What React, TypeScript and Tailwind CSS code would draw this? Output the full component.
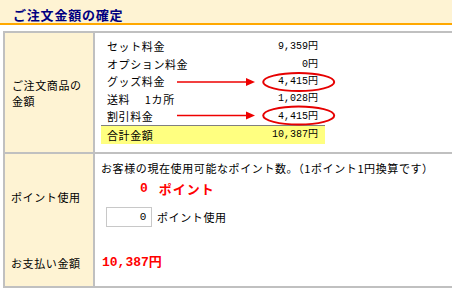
import React from 'react';

const jp = "font-['Noto_Sans_CJK_JP',sans-serif]";
const mono = "font-['Liberation_Mono','Noto_Sans_CJK_JP',monospace]";

const lines = [
  { label: 'セット料金', amount: '9,359' },
  { label: 'オプション料金', amount: '0' },
  { label: 'グッズ料金', amount: '4,415' },
  { label: '送料\u3000 1カ所', amount: '1,028' },
  { label: '割引料金', amount: '4,415' },
];

const Marks = () => (
  <svg className="pointer-events-none absolute left-0 top-0" width="452" height="290">
    {/* arrows + circles around the matching amounts */}
    {[82, 115.5].map((y) => (
      <g key={y}>
        <line x1="177" y1={y} x2="248" y2={y} stroke="#ee0000" strokeWidth="1.3" />
        <polygon points={`246,${y - 4} 255,${y} 246,${y + 4}`} fill="#ee0000" />
        <ellipse cx="298.7" cy={y} rx="35.5" ry="9" fill="none" stroke="#e60000" strokeWidth="2" />
      </g>
    ))}
  </svg>
);

const App = () => {
  return (
    <div className={`relative h-[290px] w-[452px] overflow-hidden bg-white text-black ${jp}`}>
      {/* Title bar */}
      <div className="h-[25px] border-b-2 border-[#ffa800] bg-[#fef3d3] pl-[13px] pt-[6px]">
        <h1 className="text-[13px] font-bold leading-[17px] tracking-[0.8px] text-[#000080]">ご注文金額の確定</h1>
      </div>

      {/* Table */}
      <div className="ml-[3px] mt-[6px] border-y-2 border-l-2 border-[#c0c0c0] text-[11px] tracking-[0.6px]">
        {/* Order amount */}
        <div className="flex h-[121px] border-b-2 border-[#c0c0c0]">
          <div className="flex w-[90px] shrink-0 items-center border-r-2 border-[#c0c0c0] bg-[#fef3d3] pl-[7px] pr-[2px] leading-[16px]">
            ご注文商品の金額
          </div>
          <div className="pl-[6px] pt-[5px]">
            <div className="w-[224px]">
              {lines.map((l) => (
                <div key={l.label} className="flex h-[17.4px] items-center justify-between pl-[6px] pr-[7px]">
                  <span className="whitespace-pre">{l.label}</span>
                  <span className={`${mono} text-[10px] tracking-normal`}>{l.amount}円</span>
                </div>
              ))}
              <div className="flex h-[19px] items-center justify-between border-t border-[#808080] bg-[#ffff80] pl-[6px] pr-[7px]">
                <span>合計金額</span>
                <span className={`${mono} text-[10px] tracking-normal`}>10,387円</span>
              </div>
            </div>
          </div>
        </div>

        {/* Points + payment */}
        <div className="grid h-[132px] grid-cols-[90px_1fr] grid-rows-[86px_46px]">
          <div className="flex items-center border-r-2 border-[#c0c0c0] bg-[#fef3d3] pl-[6px]">ポイント使用</div>
          <div className="pl-[6px] pt-[7px]">
            <p className="leading-[14px]">お客様の現在使用可能なポイント数。（1ポイント1円換算です）</p>
            <p className="mt-[6px] flex items-center pl-[39px] text-[13px] font-bold leading-[16px] tracking-[1px] text-[#ff0000]">
              <span className={mono}>0</span>
              <span className="ml-[10px]">ポイント</span>
            </p>
            <div className="mt-[10px] flex items-center gap-[5px] pl-[5px]">
              <input
                readOnly
                value="0"
                className={`h-[20px] w-[46px] border border-[#c8c8c8] pr-[4px] text-right text-[11px] ${mono} outline-none`}
              />
              <span>ポイント使用</span>
            </div>
          </div>
          <div className="flex items-center border-r-2 border-[#c0c0c0] bg-[#fef3d3] pl-[6px]">お支払い金額</div>
          <div className="flex items-center pl-[7px]">
            <span className={`${mono} text-[13px] font-bold tracking-normal text-[#ff0000]`}>10,387円</span>
          </div>
        </div>
      </div>

      <Marks />
    </div>
  );
};

export default App;
